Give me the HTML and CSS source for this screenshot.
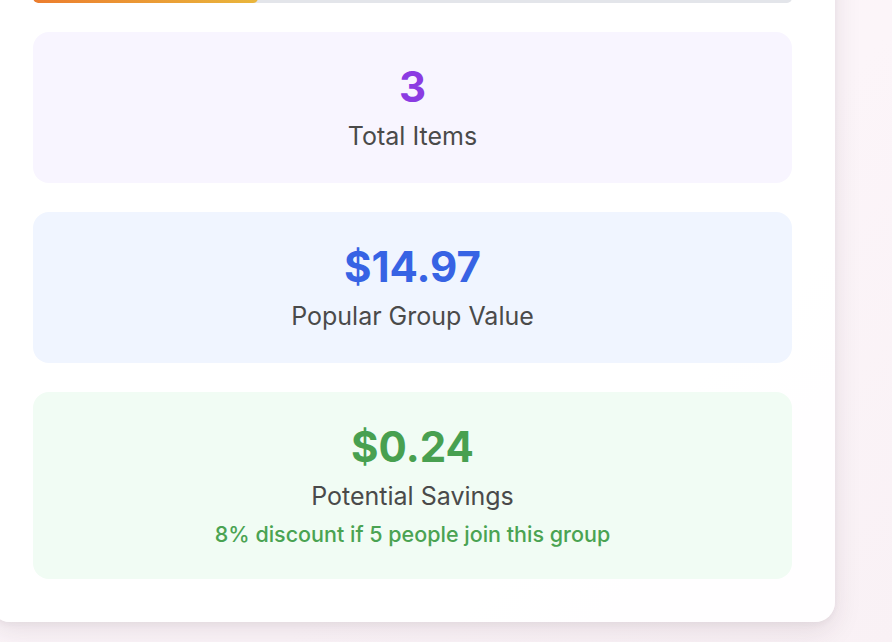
FILE: index.html
```html
<!DOCTYPE html>
<html lang="en">
<head>
<meta charset="utf-8">
<title>Group Summary</title>
<link rel="stylesheet" href="styles.css">
</head>
<body>
<div class="page">
  <section class="card">
    <div class="progress"><div class="progress-fill" style="width: 29.6%"></div></div>
    <div class="stat stat-purple">
      <div class="stat-value">3</div>
      <div class="stat-label">Total Items</div>
    </div>
    <div class="stat stat-blue">
      <div class="stat-value">$14.97</div>
      <div class="stat-label">Popular Group Value</div>
    </div>
    <div class="stat stat-green">
      <div class="stat-value">$0.24</div>
      <div class="stat-label">Potential Savings</div>
      <div class="stat-note">8% discount if 5 people join this group</div>
    </div>
  </section>
</div>
</body>
</html>
```

FILE: styles.css
```css
html, body {
  margin: 0;
  padding: 0;
}
body {
  background: linear-gradient(135deg, #fbf6f9 0%, #fcf5f9 60%, #f9f1f5 100%);
  font-family: Inter, "Noto Sans", sans-serif;
  font-optical-sizing: none;
  min-height: 642px;
  overflow: hidden;
}
.page {
  width: 892px;
  height: 642px;
}
.card {
  width: 845px;
  box-sizing: border-box;
  margin-left: -10px;
  margin-top: -50px;
  padding: 43px 43px 43px 43px;
  background: rgba(255, 255, 255, 0.92);
  border-radius: 20px;
  box-shadow: 0 10px 28px rgba(60, 30, 50, 0.10), 0 2px 6px rgba(60, 30, 50, 0.05);
  display: flex;
  flex-direction: column;
  gap: 29px;
}
.progress {
  height: 10px;
  border-radius: 5px;
  background: #e3e5ea;
  overflow: hidden;
}
.progress-fill {
  height: 100%;
  border-radius: 5px;
  background: linear-gradient(90deg, #ec7d2e 0%, #e9b63c 100%);
}
.stat {
  border-radius: 16px;
  padding: 31px 20px 31px;
  display: flex;
  flex-direction: column;
  align-items: center;
  text-align: center;
}
.stat-purple { background: #f8f5ff; }
.stat-blue { background: #f0f5ff; }
.stat-green { background: #f1fcf4; }
.stat-value {
  font-size: 42px;
  line-height: 48px;
  font-weight: 700;
  margin-bottom: 9px;
}
.stat-purple .stat-value { color: #8b3be2; }
.stat-blue .stat-value { color: #3763e4; }
.stat-green .stat-value { color: #48a050; }
.stat-label {
  font-size: 25px;
  line-height: 32px;
  color: #4a4a4a;
}
.stat-note {
  margin-top: 8px;
  font-size: 21.5px;
  line-height: 28px;
  font-weight: 500;
  color: #4aa352;
}
```
